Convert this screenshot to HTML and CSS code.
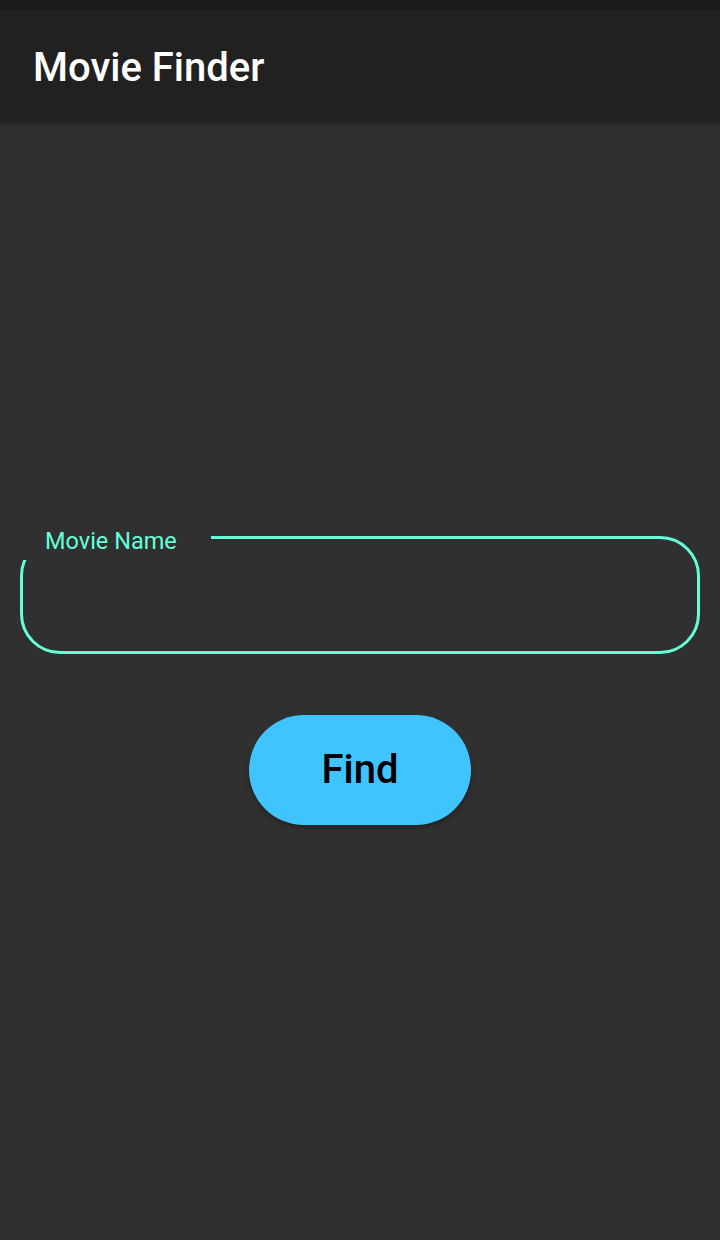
FILE: index.html
```html
<!DOCTYPE html>
<html>
<head>
<meta charset="utf-8">
<link rel="stylesheet" href="styles.css">
</head>
<body>
<div class="statusbar"></div>
<header class="appbar"><h1 class="title">Movie Finder</h1></header>
<main class="main">
  <div class="field">
    <span class="label">Movie Name</span>
  </div>
  <button class="find">Find</button>
</main>
</body>
</html>
```
FILE: styles.css
```css
html, body {
  margin: 0;
  padding: 0;
  background: #303030;
  font-family: Roboto, "Liberation Sans", sans-serif;
}
body {
  width: 720px;
  height: 1240px;
  overflow: hidden;
  display: flex;
  flex-direction: column;
}
.statusbar {
  height: 10px;
  background: #1a1a1a;
}
.appbar {
  height: 112px;
  background: #212121;
  display: flex;
  align-items: center;
  padding-left: 33px;
  padding-top: 3px;
  box-sizing: border-box;
  box-shadow: 0 2px 4px rgba(0,0,0,0.35);
  position: relative;
  z-index: 1;
}
.title {
  margin: 0;
  color: #ffffff;
  font-size: 40px;
  font-weight: 500;
  line-height: 48px;
  letter-spacing: 0;
}
.main {
  flex: 1;
  display: flex;
  flex-direction: column;
  align-items: center;
  justify-content: center;
  padding-bottom: 2px;
}
.field {
  box-sizing: border-box;
  width: 680px;
  height: 118px;
  border: 3px solid #64ffda;
  border-radius: 40px;
  position: relative;
}
.label {
  position: absolute;
  left: -6px;
  top: -12px;
  box-sizing: border-box;
  width: 194px;
  height: 33px;
  padding-left: 28px;
  background: #303030;
  color: #64ffda;
  font-size: 23.5px;
  line-height: 28px;
}
.find {
  margin-top: 61px;
  width: 222px;
  height: 110px;
  border: none;
  border-radius: 55px;
  background: #40c4ff;
  color: #000000;
  font-family: Roboto, "Liberation Sans", sans-serif;
  font-size: 40px;
  font-weight: 500;
  padding: 0;
  box-shadow: 0 3px 4px rgba(0,0,0,0.3);
}
```
